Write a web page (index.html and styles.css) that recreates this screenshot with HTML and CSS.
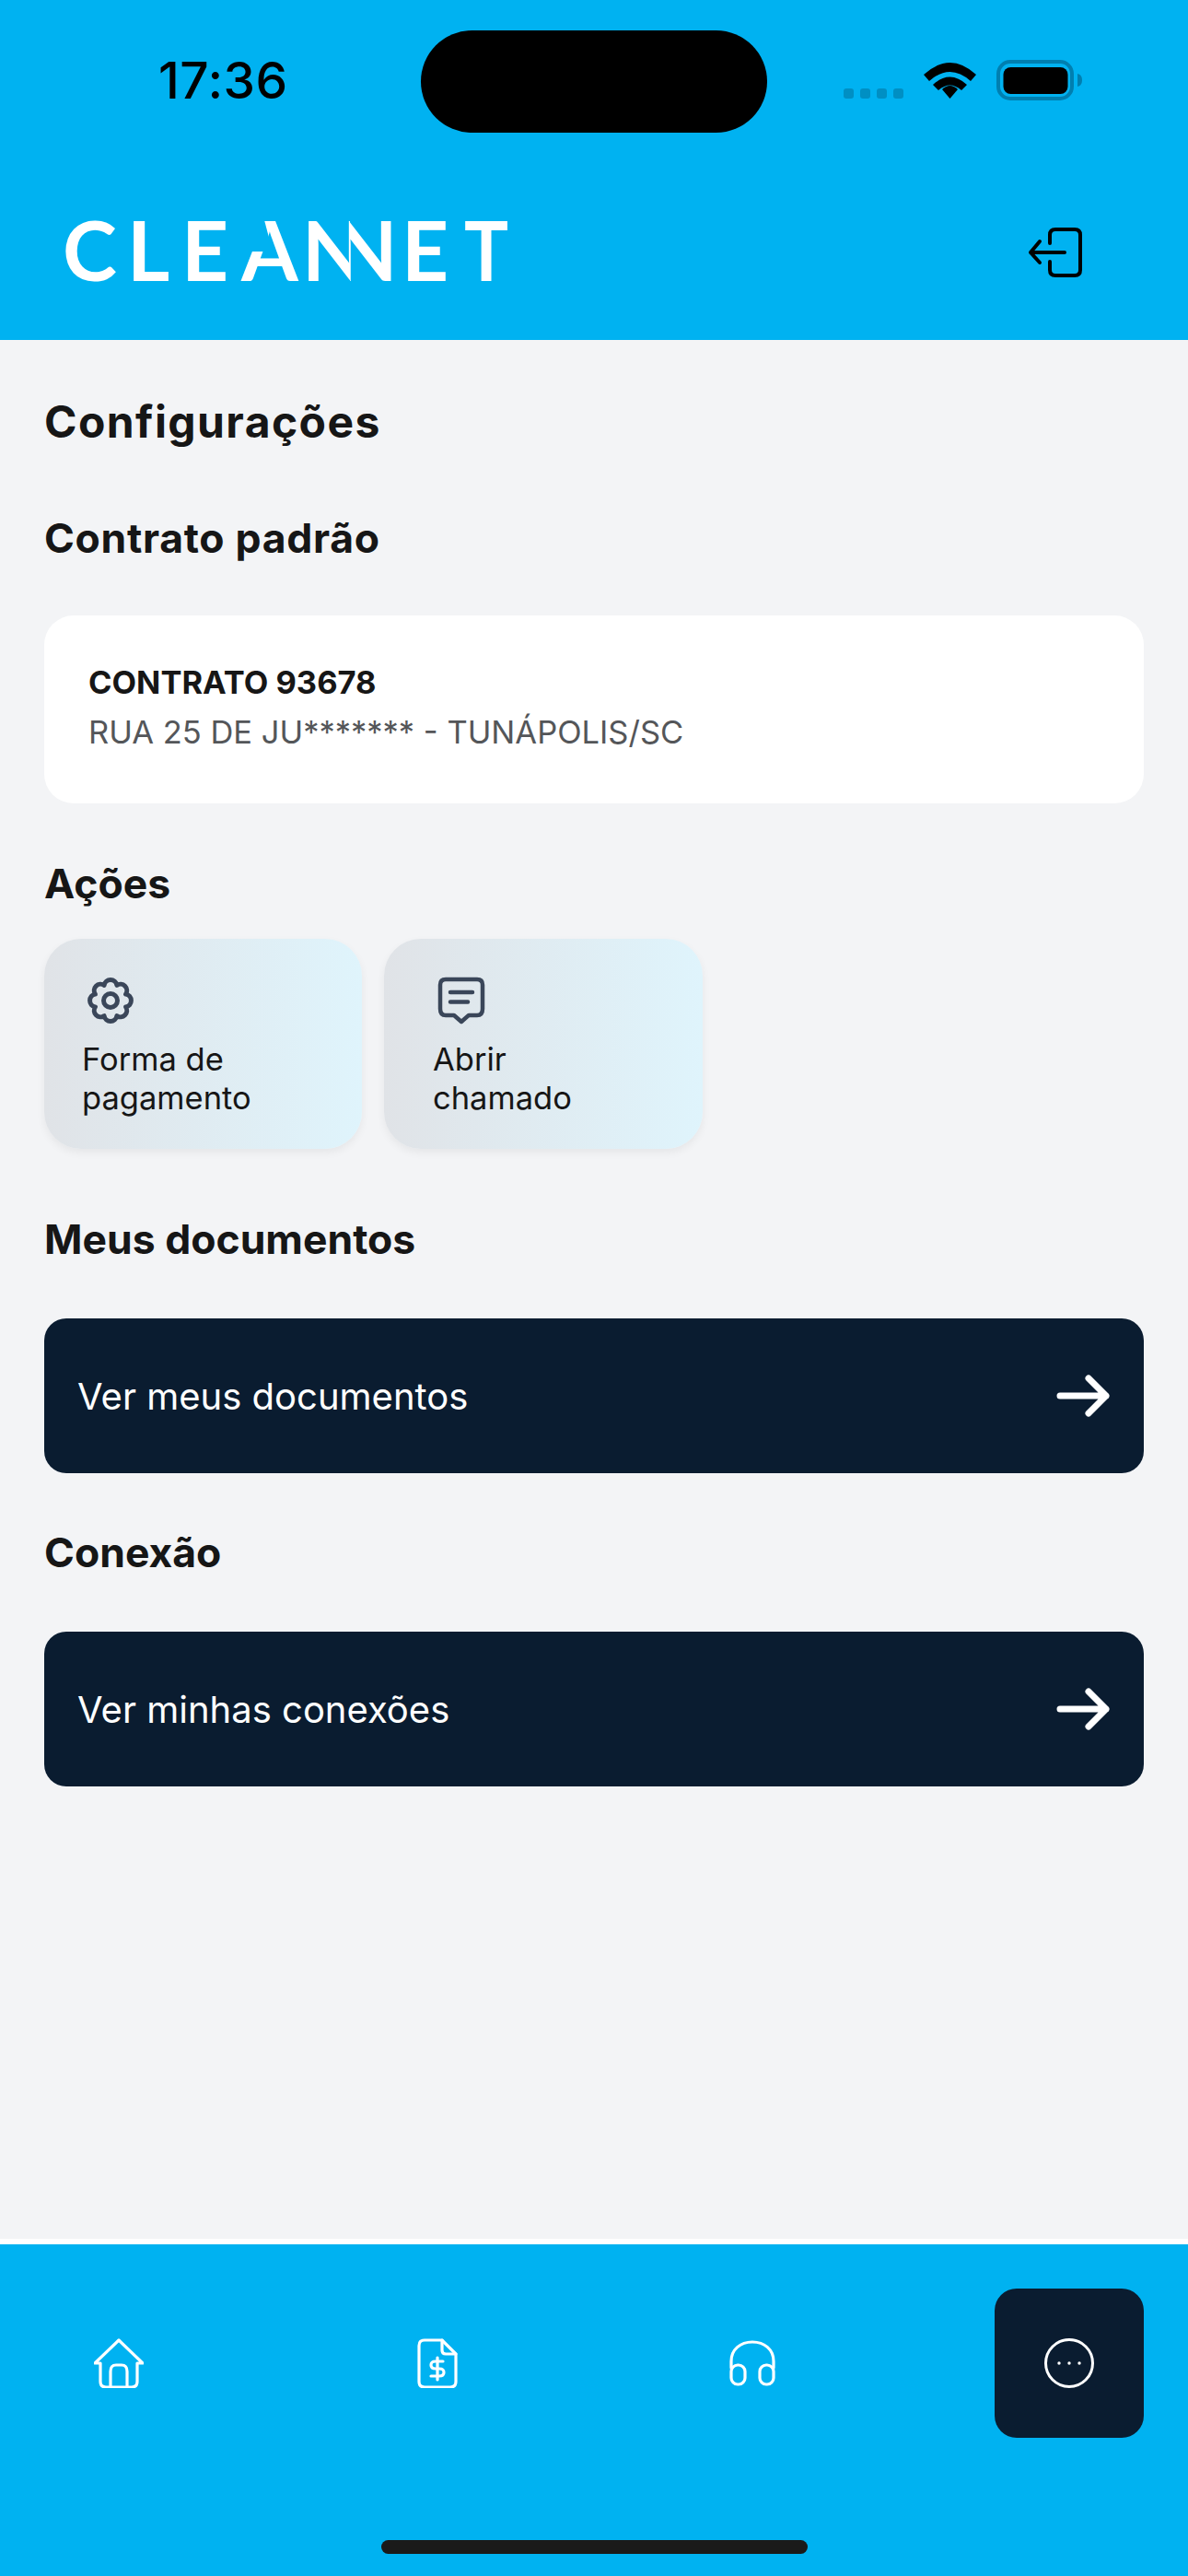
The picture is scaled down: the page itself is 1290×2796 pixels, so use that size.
FILE: index.html
```html
<!DOCTYPE html>
<html lang="pt-BR">
<head>
<meta charset="utf-8">
<title>Configurações</title>
<link rel="stylesheet" href="styles.css">
</head>
<body>
<div class="app">
	<header class="top">
		<div class="status">
			<span class="clock">17:36</span>
			<div class="island"></div>
			<div class="status-icons">
				<div class="signal"><i></i><i></i><i></i><i></i></div>
				<svg class="wifi" width="57" height="42" viewBox="0 0 57 42">
					<path d="M0 16 Q28.500 -10 57 16 L51 23 Q28.500 3 6 23 Z"/>
					<path d="M10 27 Q28.500 10 47 27 L41 33 Q28.500 22 16 33 Z"/>
					<path d="M20 37 Q28.500 29 37 37 L28.500 47 Z" transform="translate(0 -5)"/>
				</svg>
				<svg class="battery" width="94" height="44" viewBox="0 0 94 44">
					<rect x="2" y="2" width="80" height="40" rx="13" fill="none" stroke="#007fb0" stroke-width="4"/>
					<rect x="7.500" y="8" width="70" height="29" rx="8"/>
					<path d="M88 15 C92 16 93 19 93 22 C93 25 92 28 88 29 Z" fill="#007fb0"/>
				</svg>
			</div>
		</div>
		<div class="brand">
			<div class="logo"><span class="l-c">C</span><span class="l-l">L</span><span class="l-e">E</span><span class="l-a">A</span><span class="l-n1">N</span><span class="l-n2">N</span><span class="l-e2">E</span><span class="l-t">T</span></div>
			<svg class="logout" width="60" height="54" viewBox="0 0 60 54" fill="none" stroke="#000" stroke-width="4" stroke-linecap="round" stroke-linejoin="round">
				<path d="M24 17 V8 Q24 2 30 2 H51 Q57 2 57 8 V46 Q57 52 51 52 H30 Q24 52 24 46 V37"/>
				<path d="M40 27 H3 M13 15 L3 27 L13 38"/>
			</svg>
		</div>
	</header>

	<main class="content">
		<h1 class="page-title">Configurações</h1>
		<h2 class="section-title contract-title">Contrato padrão</h2>
		<div class="contract-card">
			<strong>CONTRATO 93678</strong>
			<span>RUA 25 DE JU******* - TUNÁPOLIS/SC</span>
		</div>

		<h2 class="section-title actions-title">Ações</h2>
		<div class="actions">
			<a class="action" href="#">
				<svg class="action-icon" width="52" height="52" viewBox="0 0 52 52" fill="none" stroke="#3a4659" stroke-width="5" stroke-linejoin="round">
					<path d="M32.900 9.400 A7 7 0 0 1 42.600 19.100 A7 7 0 0 1 42.600 32.900 A7 7 0 0 1 32.900 42.600 A7 7 0 0 1 19.100 42.600 A7 7 0 0 1 9.400 32.900 A7 7 0 0 1 9.400 19.100 A7 7 0 0 1 19.100 9.400 A7 7 0 0 1 32.900 9.400 Z"/>
					<circle cx="26" cy="26" r="7.500"/>
				</svg>
				<span>Forma de<br>pagamento</span>
			</a>
			<a class="action action-wide" href="#">
				<svg class="action-icon" width="52" height="52" viewBox="0 0 52 52" fill="none" stroke="#3a4659" stroke-width="4.500" stroke-linecap="round" stroke-linejoin="round">
					<path d="M9 3 H43 Q49 3 49 9 V35 Q49 42 43 42 H34 L26 49 L18 42 H9 Q3 42 3 35 V9 Q3 3 9 3 Z"/>
					<path d="M14 17 H38 M14 27.500 H33"/>
				</svg>
				<span>Abrir<br>chamado</span>
			</a>
		</div>

		<h2 class="section-title docs-title">Meus documentos</h2>
		<a class="link-btn" href="#">
			<span>Ver meus documentos</span>
			<svg class="arrow" width="60" height="46" viewBox="0 0 60 46" fill="none" stroke="#fff" stroke-width="7" stroke-linecap="round" stroke-linejoin="round"><path d="M6 23 H56 M37 4 L56 23 L37 42"/></svg>
		</a>

		<h2 class="section-title conn-title">Conexão</h2>
		<a class="link-btn" href="#">
			<span>Ver minhas conexões</span>
			<svg class="arrow" width="60" height="46" viewBox="0 0 60 46" fill="none" stroke="#fff" stroke-width="7" stroke-linecap="round" stroke-linejoin="round"><path d="M6 23 H56 M37 4 L56 23 L37 42"/></svg>
		</a>
	</main>

	<nav class="tabbar">
		<div class="tabs">
			<a class="tab" href="#">
				<svg width="54" height="54" viewBox="0 0 54 54" fill="none" stroke="#fff" stroke-width="3.200" stroke-linecap="round" stroke-linejoin="round">
					<path d="M27 2 L53 27 H47 V47 Q47 53 41 53 H13 Q7 53 7 47 V27 H1 Z"/>
					<path d="M18 53 V36 Q18 29 24 29 H30 Q36 29 36 36 V53"/>
				</svg>
			</a>
			<a class="tab tab-doc" href="#">
				<svg width="44" height="54" viewBox="0 0 44 54" fill="none" stroke="#fff" stroke-width="3.200" stroke-linecap="round" stroke-linejoin="round">
					<path d="M8 2 H27 L42 17 V47 Q42 53 36 53 H8 Q2 53 2 47 V8 Q2 2 8 2 Z"/>
					<path d="M27 2 V13 Q27 17 31 17 H42"/>
					<path d="M28 25 H20 Q15 25 15 29 Q15 33 20 33 H24 Q29 33 29 37 Q29 41 24 41 H15 M22 21 V45"/>
				</svg>
			</a>
			<a class="tab tab-support" href="#">
				<svg width="50" height="50" viewBox="0 0 50 50" fill="none" stroke="#fff" stroke-width="3.200" stroke-linecap="round" stroke-linejoin="round">
					<path d="M2 30 V23 C2 10 12 2 25 2 C38 2 48 10 48 23 V30"/>
					<rect x="2" y="27" width="15" height="21" rx="7"/>
					<rect x="33" y="27" width="15" height="21" rx="7"/>
				</svg>
			</a>
			<a class="tab tab-more" href="#">
				<svg width="54" height="54" viewBox="0 0 54 54" fill="none" stroke="#fff" stroke-width="3">
					<circle cx="27" cy="27" r="25.500"/>
					<circle cx="16" cy="27" r="1.700" fill="#fff" stroke="none"/>
					<circle cx="27" cy="27" r="1.700" fill="#fff" stroke="none"/>
					<circle cx="38" cy="27" r="1.700" fill="#fff" stroke="none"/>
				</svg>
			</a>
		</div>
		<div class="home-bar"></div>
	</nav>
</div>
</body>
</html>
```

FILE: styles.css
```css
*{
	margin:0;
	padding:0;
	box-sizing:border-box;
}
body{
	width:1290px;
	height:2796px;
	overflow:hidden;
	background:#f3f4f6;
	font-family:"Inter","Liberation Sans",sans-serif;
	color:#161616;
}
a{
	text-decoration:none;
	color:inherit;
}
.app{
	height:2796px;
	display:flex;
	flex-direction:column;
}

/* header */
.top{
	height:369px;
	background:#00b2f1;
	flex:none;
}
.status{
	display:flex;
	align-items:flex-start;
	height:144px;
	padding-top:33px;
}
.clock{
	width:457px;
	padding:23px 0 0 172px;
	font-size:55px;
	line-height:62px;
	font-weight:500;
	letter-spacing:.5px;
	color:#000;
}
.island{
	width:376px;
	height:111px;
	border-radius:56px;
	background:#000;
}
.status-icons{
	display:flex;
	align-items:flex-start;
	padding:32px 0 0 83px;
}
.signal{
	display:flex;
	gap:7px;
	margin-top:31px;
	margin-right:22px;
}
.signal i{
	display:block;
	width:11px;
	height:11px;
	border-radius:3px;
	background:#008fc3;
}
.wifi{
	margin-right:22px;
}
.brand{
	display:flex;
	justify-content:space-between;
	align-items:flex-start;
	padding:91px 114px 0 68px;
}
.logo{
	display:flex;
	font-family:"Lato","Liberation Sans",sans-serif;
	font-size:89px;
	line-height:71px;
	font-weight:700;
	color:#fff;
}
.logo span{
	display:block;
	flex:none;
}
.l-c{ width:70px; }
.l-l{ width:59px; }
.l-e{ width:65px; }
.l-a{ width:66px; position:relative; }
/* the logo's A has no upper left stroke */
.l-a::after{
	content:"";
	position:absolute;
	left:-3px;
	top:0;
	width:40px;
	height:38px;
	background:#00b2f1;
	clip-path:polygon(0 0,27px 0,37px 100%,0 100%);
}
/* the two N share one diagonal, each one only shows half of the glyph */
.l-n1{ width:51.500px; overflow:hidden; }
.l-n2{ width:56.500px; overflow:hidden; text-indent:-16.500px; }
.l-e2{ width:67px; }
.l-t{ width:52px; transform:scaleX(.9); transform-origin:left center; margin-left:1px; }
.logout{
	margin-top:12px;
}

/* content */
.content{
	flex:1;
	padding:0 48px;
}
.page-title{
	margin-top:66px;
	font-size:48px;
	line-height:46px;
	font-weight:700;
	letter-spacing:1.400px;
}
.section-title{
	font-size:44.500px;
	line-height:46px;
	font-weight:700;
}
.contract-title{
	margin-top:80px;
	letter-spacing:.7px;
}
.contract-card{
	display:flex;
	flex-direction:column;
	gap:18px;
	height:204px;
	margin-top:61px;
	padding:55px 48px 0;
	border-radius:32px;
	background:#fff;
	font-size:34.500px;
	line-height:36px;
}
.contract-card strong{
	font-weight:700;
}
.contract-card span{
	color:#545659;
}
.actions-title{
	margin-top:64px;
}
.actions{
	display:flex;
	gap:24px;
	margin-top:37px;
}
.action{
	display:block;
	width:345px;
	height:228px;
	padding:41px 0 0 41px;
	border-radius:40px;
	background:linear-gradient(90deg,#e0e3e7,#dff4fc);
	box-shadow:0 4px 10px rgba(0,0,0,.06);
	font-size:34.500px;
	line-height:42px;
}
.action-wide{
	width:346px;
	padding-left:53px;
}
.action-icon{
	display:block;
	margin-left:5px;
	margin-bottom:17px;
}
.docs-title{
	margin-top:75px;
}
.conn-title{
	margin-top:63px;
}
.link-btn{
	display:flex;
	justify-content:space-between;
	align-items:center;
	height:168px;
	margin-top:63px;
	padding:0 37px 0 36px;
	border-radius:24px;
	background:#0a1c30;
	color:#fff;
	font-size:40px;
}

/* bottom nav */
.tabbar{
	flex:none;
	height:360px;
	background:#00b2f1;
	box-shadow:0 -6px 0 #fff;
}
.tabs{
	display:flex;
	align-items:center;
	height:162px;
	margin-top:48px;
	padding-left:102px;
}
.tab{
	flex:none;
	display:flex;
	align-items:center;
	justify-content:center;
}
.tab-doc{
	margin-left:297px;
}
.tab-support{
	margin-left:295px;
}
.tab-more{
	width:162px;
	height:162px;
	margin-left:238px;
	border-radius:24px;
	background:#0a1c30;
}
.home-bar{
	width:463px;
	height:15px;
	margin:111px auto 0;
	border-radius:8px;
	background:#1a1a1a;
}
```
